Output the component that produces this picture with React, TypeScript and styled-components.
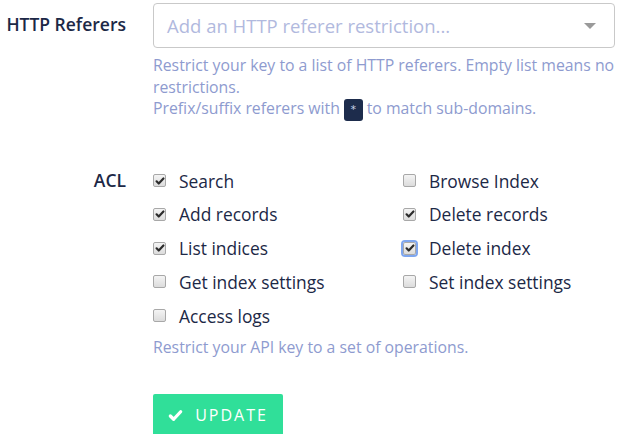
import styled, { createGlobalStyle } from "styled-components";

const GlobalStyle = createGlobalStyle`
  body {
    margin: 0;
    background: #fff;
    font-family: "Open Sans", "Liberation Sans", sans-serif;
  }
`;

const Page = styled.div`
  padding-top: 3px;
`;

const Field = styled.div<{ $gap?: number }>`
  display: grid;
  grid-template-columns: 126px 462px;
  column-gap: 27px;
  margin-top: ${(p) => p.$gap ?? 0}px;
`;

const Label = styled.div<{ $lh: number }>`
  text-align: right;
  font-size: 17.5px;
  font-weight: 600;
  color: #1c2846;
  line-height: ${(p) => p.$lh}px;
  white-space: nowrap;
`;

const Select = styled.div`
  box-sizing: border-box;
  height: 45px;
  border: 1px solid #c9c9c9;
  border-radius: 4px;
  display: flex;
  align-items: center;
  justify-content: space-between;
  padding: 0 18px 0 13px;
  font-size: 18.5px;
  color: #b1b9de;
`;

const Caret = styled.span`
  width: 0;
  height: 0;
  border-left: 6px solid transparent;
  border-right: 6px solid transparent;
  border-top: 6px solid #9a9a9a;
`;

const Help = styled.p<{ $top: number }>`
  margin: ${(p) => p.$top}px 0 0;
  font-size: 15.8px;
  line-height: 21.5px;
  color: #8e9bcf;
`;

const Code = styled.code`
  display: inline-block;
  background: #1d2c4c;
  color: #c9d2e8;
  border-radius: 3px;
  font-family: "DejaVu Sans Mono", monospace;
  font-size: 11px;
  line-height: 22px;
  padding: 0 6px;
  vertical-align: middle;
`;

const Grid = styled.div`
  display: grid;
  grid-template-columns: 250px 212px;
  grid-auto-rows: 33.75px;
`;

const Option = styled.label`
  display: flex;
  align-items: center;
  gap: 13px;
  font-size: 17.4px;
  color: #1c2846;
  white-space: nowrap;
`;

const Box = styled.span<{ $checked: boolean; $focus?: boolean }>`
  box-sizing: border-box;
  flex: none;
  width: 13px;
  height: 13px;
  border: 1px solid #a8a8a8;
  border-radius: 2px;
  background: linear-gradient(#f4f4f4, #dcdcdc);
  display: flex;
  align-items: center;
  justify-content: center;
  outline: ${(p) => (p.$focus ? "2px solid #7ea6ef" : "none")};
  outline-offset: 0;
  svg {
    display: ${(p) => (p.$checked ? "block" : "none")};
  }
`;

const Button = styled.button`
  margin-top: 36px;
  width: 130px;
  height: 42px;
  border: none;
  border-radius: 2px;
  background: #30df99;
  color: #fff;
  font-family: inherit;
  font-size: 16px;
  letter-spacing: 2px;
  display: flex;
  align-items: center;
  justify-content: center;
  gap: 12px;
  padding: 0;
`;

const acl = [
  { name: "Search", checked: true },
  { name: "Browse Index", checked: false },
  { name: "Add records", checked: true },
  { name: "Delete records", checked: true },
  { name: "List indices", checked: true },
  { name: "Delete index", checked: true, focus: true },
  { name: "Get index settings", checked: false },
  { name: "Set index settings", checked: false },
  { name: "Access logs", checked: false },
];

const Tick = ({ size, color, weight }: { size: number; color: string; weight: number }) => (
  <svg width={size} height={size} viewBox="0 0 16 16">
    <path d="M2.5 8.5l3.5 3.5L13.5 4" fill="none" stroke={color} strokeWidth={weight} strokeLinecap="round" strokeLinejoin="round" />
  </svg>
);

export default function App() {
  return (
    <Page>
      <GlobalStyle />
      <Field>
        <Label $lh={43}>HTTP Referers</Label>
        <div>
          <Select>
            <span>Add an HTTP referer restriction...</span>
            <Caret />
          </Select>
          <Help $top={7}>
            Restrict your key to a list of HTTP referers. Empty list means no restrictions.
            <br />
            Prefix/suffix referers with <Code>*</Code> to match sub-domains.
          </Help>
        </div>
      </Field>
      <Field $gap={43}>
        <Label $lh={33.75}>ACL</Label>
        <div>
          <Grid>
            {acl.map((a) => (
              <Option key={a.name}>
                <Box $checked={a.checked} $focus={a.focus}>
                  <Tick size={10} color="#2b2b2b" weight={3.5} />
                </Box>
                {a.name}
              </Option>
            ))}
          </Grid>
          <Help $top={4}>Restrict your API key to a set of operations.</Help>
          <Button>
            <Tick size={15} color="#fff" weight={3.5} />
            UPDATE
          </Button>
        </div>
      </Field>
    </Page>
  );
}
